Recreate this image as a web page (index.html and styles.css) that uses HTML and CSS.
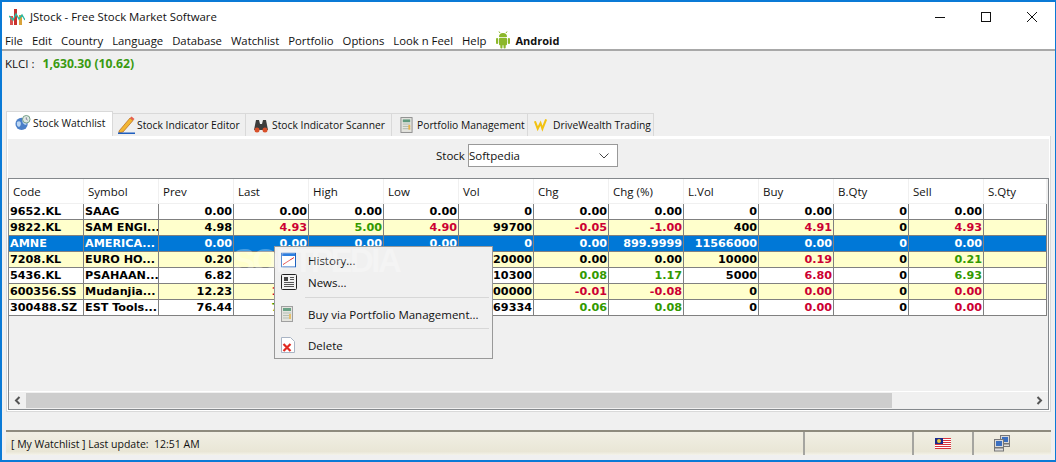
FILE: index.html
```html
<!DOCTYPE html>
<html lang="en">
<head>
<meta charset="utf-8">
<title>JStock</title>
<link rel="stylesheet" href="styles.css">
</head>
<body>
<div class="window">
  <header class="titlebar">
    <svg class="appicon" width="16" height="18" viewBox="0 0 16 18"><rect x="1" y="8" width="3" height="9" fill="#d9534f"/><rect x="5" y="1" width="3" height="16" fill="#c9302c"/><rect x="10" y="7" width="3" height="10" fill="#d9a23a"/><path d="M0 8l4 4 3-6 3 5 3-4 3 5" fill="none" stroke="#2fb8a0" stroke-width="1.4"/></svg>
    <span class="title">JStock - Free Stock Market Software</span>
    <div class="controls">
      <span class="ctl"><svg width="10" height="10" viewBox="0 0 10 10"><path d="M0 5.500h10" stroke="#111" fill="none"/></svg></span>
      <span class="ctl"><svg width="10" height="10" viewBox="0 0 10 10"><rect x=".5" y=".5" width="9" height="9" stroke="#111" fill="none"/></svg></span>
      <span class="ctl"><svg width="10" height="10" viewBox="0 0 10 10"><path d="M0 0l10 10M10 0L0 10" stroke="#111" fill="none"/></svg></span>
    </div>
  </header>
  <nav class="menubar">
    <span>File</span><span>Edit</span><span>Country</span><span>Language</span><span>Database</span><span>Watchlist</span><span>Portfolio</span><span>Options</span><span>Look n Feel</span><span>Help</span>
    <span class="android"><svg width="14" height="18" viewBox="0 0 14 18"><path d="M3 6a4 4 0 0 1 8 0z" fill="#8cb82b"/><path d="M4 2L3 .5M10 2l1-1.500" stroke="#8cb82b"/><rect x="3" y="6.800" width="8" height="7.500" rx="1" fill="#8cb82b"/><rect x="0" y="7" width="2.200" height="6" rx="1" fill="#8cb82b"/><rect x="11.800" y="7" width="2.200" height="6" rx="1" fill="#8cb82b"/><rect x="4.300" y="13" width="2.200" height="4.500" rx="1" fill="#8cb82b"/><rect x="7.500" y="13" width="2.200" height="4.500" rx="1" fill="#8cb82b"/></svg><b>Android</b></span>
  </nav>
  <div class="index"><span>KLCI :</span><b>1,630.30 (10.62)</b></div>
  <div class="tabs">
    <div class="tab active"><svg width="16" height="18" viewBox="0 0 17 18"><circle cx="7" cy="10" r="6.500" fill="#4a7fc8"/><path d="M2 8c3-2 5 0 4 3s-3 2-4 0zM8 5c3 0 5 3 4 6-3 0-5-3-4-6z" fill="#bcd6f2"/><circle cx="12" cy="5" r="4" fill="#dfe8e4" stroke="#6f9a80"/><path d="M12 3v2l1.500 1" stroke="#557" fill="none" stroke-width=".7"/></svg><span>Stock Watchlist</span></div>
    <div class="tab"><svg width="17" height="18" viewBox="0 0 17 18"><path d="M1 15L12 2l3 2.500L5 16l-4 1z" fill="#f2b632" stroke="#b5651d" stroke-width=".7"/><path d="M12 2l1.500-1.500 3 2.500L15 4.500z" fill="#e8604c"/><rect x="0" y="16.500" width="17" height="1.500" fill="#1f5fbf"/></svg><span>Stock Indicator Editor</span></div>
    <div class="tab"><svg width="16" height="16" viewBox="0 0 16 16"><path d="M1 13l2-10h3l1 4h2l1-4h3l2 10z" fill="#3c3c3c"/><circle cx="4" cy="13" r="2.500" fill="#d8502a"/><circle cx="12" cy="13" r="2.500" fill="#d8502a"/></svg><span>Stock Indicator Scanner</span></div>
    <div class="tab"><svg width="13" height="18" viewBox="0 0 14 18"><rect x="1" y="1" width="12" height="16" fill="#e4e4de" stroke="#8a8a8a"/><rect x="3" y="3" width="8" height="3" fill="#5f9a7e"/><path d="M3 8h8M3 10.500h8M3 13h8" stroke="#a9b6a9"/><rect x="9" y="9" width="2" height="5" fill="#e6b34d"/></svg><span>Portfolio Management</span></div>
    <div class="tab"><svg width="14" height="14" viewBox="0 0 15 14"><path d="M1 3l3 8 3-6 2 6 4-10" fill="none" stroke="#f2c211" stroke-width="2.200"/></svg><span>DriveWealth Trading</span></div>
  </div>
  <main class="panel">
    <div class="content">
      <div class="filter"><label class="filter-label">Stock</label><div class="combo"><span>Softpedia</span><svg width="10" height="6" viewBox="0 0 10 6"><path d="M.5.500L5 5 9.500.500" fill="none" stroke="#444"/></svg></div></div>
      <div class="pane">
        <div class="viewport">
          <table class="grid">
            <colgroup><col class="c1"><col class="c"><col class="c"><col class="c"><col class="c"><col class="c"><col class="c"><col class="c"><col class="c"><col class="c"><col class="c"><col class="c"><col class="c"><col class="cl"></colgroup>
            <thead><tr><th>Code</th><th>Symbol</th><th>Prev</th><th>Last</th><th>High</th><th>Low</th><th>Vol</th><th>Chg</th><th>Chg (%)</th><th>L.Vol</th><th>Buy</th><th>B.Qty</th><th>Sell</th><th>S.Qty</th></tr></thead>
            <tbody>
              <tr><td>9652.KL</td><td>SAAG</td><td class="n">0.00</td><td class="n">0.00</td><td class="n">0.00</td><td class="n">0.00</td><td class="n">0</td><td class="n">0.00</td><td class="n">0.00</td><td class="n">0</td><td class="n">0.00</td><td class="n">0</td><td class="n">0.00</td><td></td></tr>
              <tr class="alt"><td>9822.KL</td><td>SAM ENGI...</td><td class="n">4.98</td><td class="n r">4.93</td><td class="n g">5.00</td><td class="n r">4.90</td><td class="n">99700</td><td class="n r">-0.05</td><td class="n r">-1.00</td><td class="n">400</td><td class="n r">4.91</td><td class="n">0</td><td class="n r">4.93</td><td></td></tr>
              <tr class="sel"><td>AMNE</td><td>AMERICA...</td><td class="n">0.00</td><td class="n">0.00</td><td class="n">0.00</td><td class="n">0.00</td><td class="n">0</td><td class="n">0.00</td><td class="n">899.9999</td><td class="n">11566000</td><td class="n">0.00</td><td class="n">0</td><td class="n">0.00</td><td></td></tr>
              <tr class="alt"><td>7208.KL</td><td>EURO HO...</td><td class="n">0.20</td><td class="n">0.20</td><td class="n">0.20</td><td class="n">0.20</td><td class="n">120000</td><td class="n">0.00</td><td class="n">0.00</td><td class="n">10000</td><td class="n r">0.19</td><td class="n">0</td><td class="n g">0.21</td><td></td></tr>
              <tr><td>5436.KL</td><td>PSAHAAN...</td><td class="n">6.82</td><td class="n g">6.90</td><td class="n g">6.93</td><td class="n">6.82</td><td class="n">110300</td><td class="n g">0.08</td><td class="n g">1.17</td><td class="n">5000</td><td class="n r">6.80</td><td class="n">0</td><td class="n g">6.93</td><td></td></tr>
              <tr class="alt"><td>600356.SS</td><td>Mudanjia...</td><td class="n">12.23</td><td class="n r">12.22</td><td class="n">12.23</td><td class="n r">12.20</td><td class="n">100000</td><td class="n r">-0.01</td><td class="n r">-0.08</td><td class="n">0</td><td class="n r">0.00</td><td class="n">0</td><td class="n r">0.00</td><td></td></tr>
              <tr><td>300488.SZ</td><td>EST Tools...</td><td class="n">76.44</td><td class="n g">76.50</td><td class="n g">76.60</td><td class="n">76.40</td><td class="n">169334</td><td class="n g">0.06</td><td class="n g">0.08</td><td class="n">0</td><td class="n r">0.00</td><td class="n">0</td><td class="n r">0.00</td><td></td></tr>
            </tbody>
          </table>
        </div>
        <div class="hscroll">
          <svg class="arrow" width="7" height="9" viewBox="0 0 7 9"><path d="M5.500 1L2 4.500 5.500 8" fill="none" stroke="#555" stroke-width="2"/></svg>
          <div class="track"><div class="thumb"></div></div>
          <svg class="arrow" width="7" height="9" viewBox="0 0 7 9"><path d="M1.500 1L5 4.500 1.500 8" fill="none" stroke="#555" stroke-width="2"/></svg>
        </div>
      </div>
    </div>
  </main>
  <footer class="statusbar">
    <div class="cell grow">[ My Watchlist ] Last update:  12:51 AM</div>
    <div class="cell mid"></div>
    <div class="cell flag"><svg width="16" height="11" viewBox="0 0 16 11"><rect width="16" height="11" fill="#fff"/><path d="M0 .5h16M0 2.500h16M0 4.500h16M0 6.500h16M0 8.500h16M0 10.500h16" stroke="#d8343c"/><rect width="8" height="6" fill="#1a2a8a"/><circle cx="4" cy="3" r="2" fill="#e8c840"/></svg></div>
    <div class="cell net"><svg width="16" height="17" viewBox="0 0 16 17"><rect x="6.500" y=".5" width="9" height="8" fill="#d9d9d9" stroke="#777"/><rect x="8" y="2" width="6" height="5" fill="#3a6fc0"/><rect x="6.500" y="9" width="9" height="2.500" fill="#ddd" stroke="#777"/><rect x=".5" y="4.500" width="9" height="8" fill="#d9d9d9" stroke="#777"/><rect x="2" y="6" width="6" height="5" fill="#3a6fc0"/><rect x=".5" y="13" width="9" height="3" fill="#ddd" stroke="#777"/></svg></div>
  </footer>
  <div class="popup">
    <div class="item"><svg width="15" height="15" viewBox="0 0 15 15"><rect x=".5" y=".5" width="14" height="14" fill="#fff" stroke="#1c62c0"/><rect x="1" y="1" width="13" height="2.500" fill="#2d7fe0"/><path d="M2 12l11-7" stroke="#e03030"/></svg><span>History...</span></div>
    <div class="item"><svg width="16" height="16" viewBox="0 0 16 16"><rect x=".5" y=".5" width="15" height="15" rx="1" fill="#f2f2f2" stroke="#222"/><rect x="3" y="3" width="4" height="4" fill="#444"/><path d="M9 3.500h4M9 5.500h4M3 8.500h10M3 10.500h10M3 12.500h10" stroke="#555"/></svg><span>News...</span></div>
    <div class="sep"></div>
    <div class="item spaced"><svg width="12" height="16" viewBox="0 0 12 16"><rect x=".5" y=".5" width="11" height="15" fill="#e4e4de" stroke="#a0a0a0"/><rect x="2" y="2" width="8" height="3" fill="#6aa286"/><path d="M2 7h8M2 9.500h8M2 12h8" stroke="#b5c0b5"/><rect x="8" y="8" width="2" height="5" fill="#e6c06d"/></svg><span>Buy via Portfolio Management...</span></div>
    <div class="sep"></div>
    <div class="item spaced last"><svg width="14" height="16" viewBox="0 0 14 16"><path d="M.5.500h9l4 4v11H.5z" fill="#fff" stroke="#a9b4c4"/><path d="M2.500 7l7 7M9.500 7l-7 7" stroke="#e02820" stroke-width="2.200"/></svg><span>Delete</span></div>
  </div>
  <div class="watermark">SOFTPEDIA</div>
</div>
</body>
</html>
```
FILE: styles.css
```css
* { box-sizing: border-box; }
html, body { margin: 0; padding: 0; }
body { font-family: "Open Sans", "Noto Sans", sans-serif; font-size: 11.5px; color: #111; }
svg { flex: none; }
.window { position: relative; width: 1056px; height: 462px; overflow: hidden; background: #f0f0f0; border: 1px solid #0a7ad6; border-width: 2px 1px 2px 2px; display: flex; flex-direction: column; }
.titlebar { height: 29px; background: #fff; display: flex; align-items: center; padding-left: 7px; flex: none; }
.appicon { margin-right: 5px; }
.title { font-size: 11.4px; }
.controls { margin-left: auto; display: flex; }
.ctl { width: 46px; height: 29px; display: flex; align-items: center; justify-content: center; }
.menubar { height: 20px; background: #fff; border-bottom: 2px solid #a8a8a8; display: flex; align-items: center; gap: 9px; padding: 0 0 0 3px; flex: none; white-space: nowrap; font-size: 11.32px; }
.android { display: flex; align-items: center; gap: 6px; }
.android b { font-weight: 700; font-size: 11px; }
.index { height: 60px; padding: 5px 0 0 3px; display: flex; gap: 8px; flex: none; }
.index b { color: #3a9a10; font-weight: 700; font-size: 12.2px; line-height: 16px; }
.tabs { height: 25px; display: flex; align-items: flex-end; padding-left: 4px; flex: none; white-space: nowrap; font-size: 10.3px; }
.tab { height: 23px; display: flex; align-items: center; background: #efefef; border: 1px solid #d9d9d9; border-left: 0; border-bottom: 0; }
.tab:nth-child(2) { width: 133px; padding-left: 5px; gap: 2px; }
.tab:nth-child(3) { width: 146px; padding-left: 7px; gap: 3px; }
.tab:nth-child(4) { width: 136px; padding-left: 8px; gap: 4px; }
.tab:nth-child(5) { width: 126px; padding-left: 6px; gap: 5px; }
.tab.active { width: 107px; height: 25px; background: #fff; border-left: 1px solid #d9d9d9; padding-left: 8px; padding-bottom: 3px; gap: 2px; }
.panel { margin: 0 4px; height: 276px; flex: none; background: #fff; border: 1px solid #d9d9d9; border-top: 0; padding: 3px 1px 1px; }
.content { height: 100%; background: #f0f0f0; display: flex; flex-direction: column; }
.filter { height: 39px; flex: none; display: flex; align-items: flex-start; padding: 5px 0 0 428px; gap: 4px; }
.filter-label { line-height: 23px; width: 28px; text-align: right; }
.combo { width: 150px; height: 23px; background: #fff; border: 1px solid #999; display: flex; align-items: center; justify-content: space-between; padding: 0 8px 0 0; }
.pane { flex: 1; border: 1px solid #84888c; display: flex; flex-direction: column; min-height: 0; }
.viewport { flex: 1; min-height: 0; overflow: hidden; border-bottom: 1px solid #fff; }
.grid { border-collapse: separate; border-spacing: 0; table-layout: fixed; width: 1038px; }
.c1 { width: 75px; } .c { width: 75px; } .cl { width: 63px; }
.grid th { height: 25px; background: #fff; font-weight: 400; text-align: left; padding: 0 0 0 4px; border-right: 1px solid #f0f0f0; border-bottom: 1px solid #f0f0f0; }
.grid td { height: 16px; padding: 1px 0 0 1px; background: #fff; border-right: 1px solid #808080; border-bottom: 1px solid #808080; font: 700 11.2px/14px "DejaVu Sans", sans-serif; color: #000; white-space: nowrap; overflow: hidden; }
.grid .alt td { background: #ffffcc; }
.grid .sel td { background: #0078d7; color: #fff; }
.grid td.n { text-align: right; padding-right: 1px; }
.grid td.r { color: #cc0033; }
.grid td.g { color: #339900; }
.hscroll { height: 16px; flex: none; display: flex; align-items: center; margin-bottom: 1px; }
.arrow { margin: 0 5px; }
.track { flex: 1; height: 15px; }
.thumb { width: 866px; height: 100%; background: #cdcdcd; }
.statusbar { margin: 18px 4px 0; height: 25px; flex: none; display: flex; border-top: 2px solid #8e8b7e; background: linear-gradient(#f1efe4, #e9e6d6 85%, #f4f3ea); }
.cell { display: flex; align-items: center; justify-content: center; border-right: 2px solid #a5a5a0; }
.cell:last-child { border-right: 0; }
.grow { flex: 1; justify-content: flex-start; padding-left: 5px; white-space: pre; font-size: 10.5px; }
.mid { width: 109px; }
.flag { width: 60px; }
.net { width: 77px; padding-right: 22px; }
.popup { position: absolute; left: 272px; top: 244px; width: 219px; height: 113px; background: #f0f0f0; border: 1px solid #999; padding-top: 2px; }
.item { height: 22px; display: flex; align-items: center; position: relative; padding-left: 33px; white-space: nowrap; }
.item svg { position: absolute; left: 6px; top: 50%; transform: translateY(-50%); }
.spaced { margin-top: 5px; }
.sep { height: 1px; background: #d7d7d7; margin: 4px 3px 0 30px; }
.spaced + .sep { margin-top: 3px; }
.watermark { position: absolute; left: 231px; top: 240px; font: 700 33px "Liberation Sans", sans-serif; color: #fff; opacity: .28; letter-spacing: -2.5px; }
```
